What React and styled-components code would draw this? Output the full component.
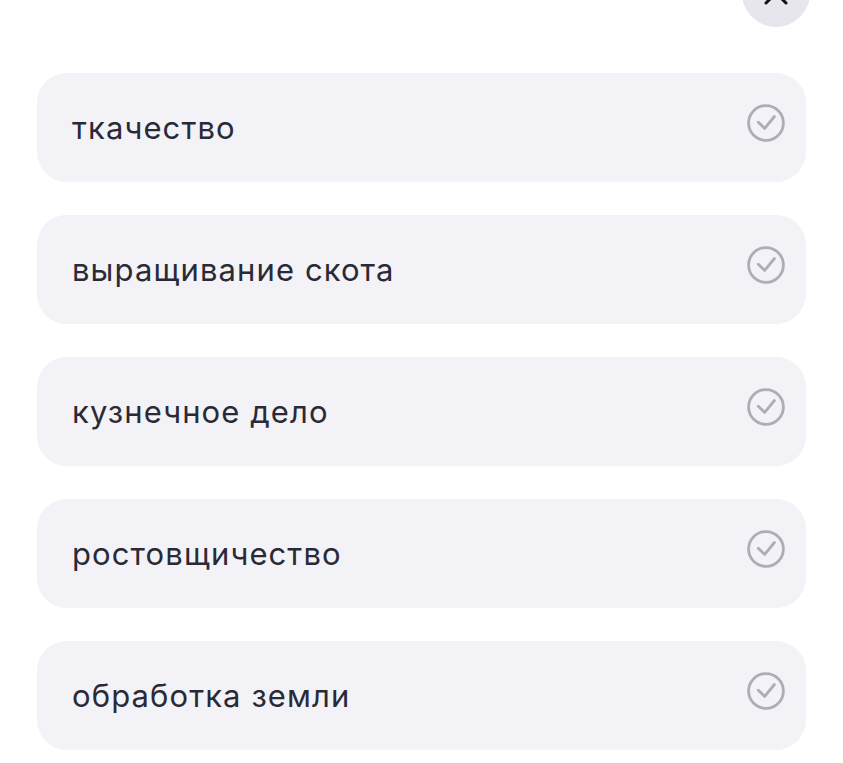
import React from "react";
import styled, { createGlobalStyle } from "styled-components";

const GlobalStyle = createGlobalStyle`
  html, body {
    margin: 0;
    padding: 0;
    background: #ffffff;
    overflow: hidden;
  }
  body {
    font-family: Inter, "Noto Sans", "Liberation Sans", sans-serif;
  }
`;

const Page = styled.div`
  width: 843px;
  height: 763px;
  box-sizing: border-box;
  padding: 0 37px;
  display: flex;
  flex-direction: column;
  overflow: hidden;
`;

const Header = styled.div`
  display: flex;
  justify-content: flex-end;
  margin-top: -41px;
  margin-right: -4px;
  margin-bottom: 46px;
`;

const CloseButton = styled.button`
  width: 68px;
  height: 68px;
  border-radius: 50%;
  border: none;
  background: #e6e6ec;
  display: flex;
  align-items: center;
  justify-content: center;
  padding: 0;
  cursor: pointer;
`;

const List = styled.div`
  display: flex;
  flex-direction: column;
  gap: 33px;
`;

const Option = styled.div`
  height: 109px;
  box-sizing: border-box;
  border-radius: 30px;
  background: #f2f2f7;
  display: flex;
  align-items: center;
  justify-content: space-between;
  padding: 0 20px 0 35px;
`;

const Label = styled.span`
  font-size: 31px;
  font-weight: 400;
  color: #2a2a36;
  letter-spacing: 1.1px;
  margin-top: -1px;
`;

const CheckMark = styled.svg`
  flex: none;
  margin-top: -9px;
`;

const CheckIcon = () => (
  <CheckMark width="40" height="40" viewBox="0 0 40 40" fill="none">
    <circle cx="20" cy="20" r="17.4" stroke="#adadb5" strokeWidth="2.8" />
    <path
      d="M12.3 19.2 L18.7 25.4 L28.4 13.5"
      stroke="#adadb5"
      strokeWidth="2.8"
      strokeLinecap="round"
      strokeLinejoin="round"
    />
  </CheckMark>
);

const CloseIcon = () => (
  <svg width="26" height="26" viewBox="0 0 26 26" fill="none">
    <path d="M3 3 L23 23 M23 3 L3 23" stroke="#111" strokeWidth="3" strokeLinecap="round" />
  </svg>
);

const options = [
  "ткачество",
  "выращивание скота",
  "кузнечное дело",
  "ростовщичество",
  "обработка земли",
];

export default function App() {
  return (
    <>
      <GlobalStyle />
      <Page>
        <Header>
          <CloseButton aria-label="Закрыть">
            <CloseIcon />
          </CloseButton>
        </Header>
        <List>
          {options.map((text) => (
            <Option key={text}>
              <Label>{text}</Label>
              <CheckIcon />
            </Option>
          ))}
        </List>
      </Page>
    </>
  );
}
